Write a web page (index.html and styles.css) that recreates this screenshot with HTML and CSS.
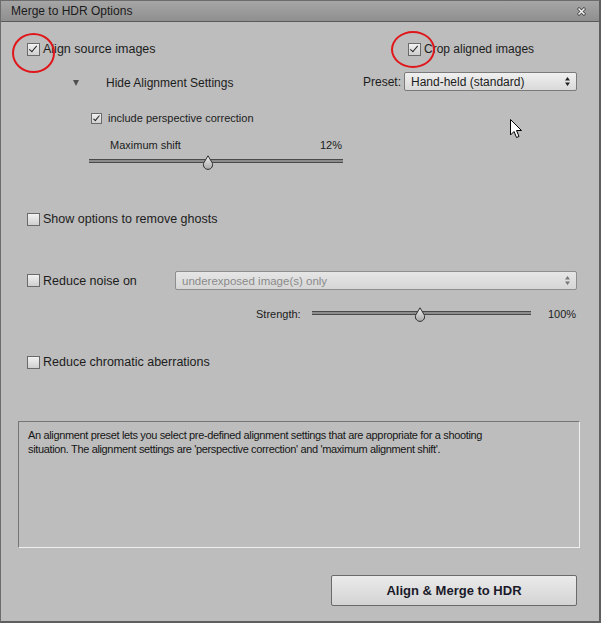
FILE: index.html
```html
<!DOCTYPE html>
<html lang="en">
<head>
	<meta charset="UTF-8">
	<title>Merge to HDR Options</title>
	<link rel="stylesheet" href="styles.css">
</head>
<body>
	<div class="window">
		<!--title bar-->
		<div class="titlebar">
			<span class="title">Merge to HDR Options</span>
			<svg class="close" width="9" height="9" viewBox="0 0 9 9">
				<path d="M1 1 L8 8 M8 1 L1 8" stroke="#3a3a3a" stroke-width="3"/>
				<path d="M1.5 1.5 L7.5 7.5 M7.5 1.5 L1.5 7.5" stroke="#f4f4f4" stroke-width="1.6"/>
			</svg>
		</div>

		<div class="content">
			<!--alignment settings-->
			<div class="top">
				<div class="left">
					<label class="row big">
						<span class="check checked"></span>Align source images
					</label>
					<div class="row toggle">
						<span class="tri"></span>Hide Alignment Settings
					</div>
					<label class="row small persp">
						<span class="check mini checked"></span>include perspective correction
					</label>
					<div class="row small shift">
						<span>Maximum shift</span><span>12%</span>
					</div>
					<div class="slider shiftslider">
						<div class="track"></div>
						<span class="thumb" style="left:47%"></span>
					</div>
				</div>
				<div class="right">
					<label class="row big crop">
						<span class="check checked"></span>Crop aligned images
					</label>
					<div class="row preset">
						<span class="plabel">Preset:</span>
						<div class="select">Hand-held (standard)<span class="arrows"></span></div>
					</div>
				</div>
			</div>

			<label class="row big ghosts">
				<span class="check"></span>Show options to remove ghosts
			</label>

			<div class="row big noise">
				<label class="noiselabel"><span class="check"></span>Reduce noise on</label>
				<div class="select disabled">underexposed image(s) only<span class="arrows"></span></div>
			</div>

			<div class="row small strength">
				<span class="slabel">Strength:</span>
				<div class="slider strslider">
					<div class="track"></div>
					<span class="thumb" style="left:49.5%"></span>
				</div>
				<span class="sval">100%</span>
			</div>

			<label class="row big chroma">
				<span class="check"></span>Reduce chromatic aberrations
			</label>

			<!--help text-->
			<div class="desc">
				<p>An alignment preset lets you select pre-defined alignment settings that are appropriate for a shooting situation. The alignment settings are 'perspective correction' and 'maximum alignment shift'.</p>
			</div>

			<div class="buttons">
				<button class="btn">Align &amp; Merge to HDR</button>
			</div>
		</div>

		<!--annotations-->
		<span class="ring ring1"></span>
		<span class="ring ring2"></span>
		<svg class="cursor" width="13" height="20" viewBox="0 0 13 20">
			<path d="M0.5 0.5 L0.5 16 L4 12.5 L6.5 18.5 L9 17.5 L6.5 11.5 L11.5 11.5 Z" fill="#fff" stroke="#000" stroke-width="1"/>
		</svg>
	</div>
</body>
</html>
```

FILE: styles.css
```css
*{
	margin:0;
	padding:0;
	box-sizing:border-box;
}
body{
	background:#bdbdbd;
	font-family:"Liberation Sans", Arial, sans-serif;
	color:#1c1c1c;
}

.window{
	position:relative;
	width:601px;
	height:623px;
	border:1px solid #6c6c6c;
	border-right:2px solid #5e5e5e;
	border-bottom:2px solid #5e5e5e;
	background:#bdbdbd;
	overflow:hidden;
}
.titlebar{
	height:21px;
	background:linear-gradient(#a6a6a6,#8f8f8f);
	border-bottom:1px solid #5a5a5a;
	display:flex;
	align-items:center;
	justify-content:space-between;
	padding:0 13px 0 10px;
}
.title{
	font-size:12px;
	color:#1a1a1a;
}
.close{
	display:block;
}

.content{
	padding:18px 0 0 26px;
}
.row{
	display:flex;
	align-items:center;
	height:18px;
}
.big{
	font-size:12.5px;
}
.small{
	font-size:11px;
}

/*checkboxes*/
.check{
	position:relative;
	display:inline-block;
	width:13px;
	height:13px;
	border:1px solid #6a6a6a;
	background:linear-gradient(#f2f2f2,#cfcfcf);
	margin-right:3px;
	flex:none;
}
.check.mini{
	width:11px;
	height:11px;
	margin-right:6px;
}
.check.checked:after{
	content:"";
	position:absolute;
	left:3px;
	top:0px;
	width:3px;
	height:7px;
	border:solid #222;
	border-width:0 1.5px 1.5px 0;
	transform:rotate(40deg);
}
.check.mini.checked:after{
	left:3px;
	top:0;
	width:2px;
	height:6px;
	border-width:0 1px 1px 0;
}

.top{
	display:flex;
	margin-bottom:40px;
}
.left{
	width:317px;
}
.right{
	margin-left:19px;
}
.toggle{
	margin-top:16px;
	padding-left:46px;
	font-size:12px;
}
.tri{
	width:0;
	height:0;
	border-left:3.5px solid transparent;
	border-right:3.5px solid transparent;
	border-top:6px solid #505050;
	margin-right:27px;
}
.persp{
	margin-top:17px;
	padding-left:64px;
}
.shift{
	margin-top:9px;
	padding-left:83px;
	width:315px;
	justify-content:space-between;
}

/*sliders*/
.slider{
	position:relative;
	height:16px;
}
.track{
	position:absolute;
	left:0;
	right:0;
	top:5px;
	height:4px;
	background:#8c8c8c;
	border-top:1px solid #4a4a4a;
	border-bottom:1px solid #4a4a4a;
}
.thumb{
	position:absolute;
	top:1px;
	width:12px;
	height:15px;
	margin-left:-6px;
	background:url("data:image/svg+xml,%3Csvg xmlns='http://www.w3.org/2000/svg' width='12' height='15' viewBox='0 0 12 15'%3E%3Cdefs%3E%3ClinearGradient id='g' x1='0' y1='0' x2='0' y2='1'%3E%3Cstop offset='0' stop-color='%23f0f0f0'/%3E%3Cstop offset='1' stop-color='%23a8a8a8'/%3E%3C/linearGradient%3E%3C/defs%3E%3Cpath d='M6 0.8 L10 7.5 A4.6 4.6 0 1 1 2 7.5 Z' fill='url(%23g)' stroke='%23303030' stroke-width='1'/%3E%3C/svg%3E") no-repeat;
}
.shiftslider{
	margin-left:62px;
	width:254px;
}

/*right column*/
.crop{
	padding-left:45px;
	font-size:12px;
}
.preset{
	margin-top:14px;
	height:19px;
	font-size:12px;
}
.plabel{
	margin-right:3px;
}
.select{
	position:relative;
	display:flex;
	align-items:center;
	width:173px;
	height:19px;
	padding-left:6px;
	border:1px solid #7a7a7a;
	border-radius:2px;
	background:linear-gradient(#f0f0f0,#d9d9d9);
	font-size:12px;
	color:#1c1c1c;
}
.arrows{
	position:absolute;
	right:6px;
	top:4px;
	width:5px;
	height:9px;
	background:url("data:image/svg+xml,%3Csvg xmlns='http://www.w3.org/2000/svg' width='5' height='9'%3E%3Cpath d='M2.5 0 L5 3.5 L0 3.5 Z M0 5.5 L5 5.5 L2.5 9 Z' fill='%23222'/%3E%3C/svg%3E") no-repeat;
}
.select.disabled{
	width:402px;
	margin-left:auto;
	margin-right:22px;
	background:linear-gradient(#e6e6e6,#d6d6d6);
	border-color:#8e8e8e;
	color:#8a8a8a;
	font-size:11.5px;
}
.select.disabled .arrows{
	opacity:.55;
}

.noise{
	margin-top:43px;
	height:19px;
}
.noiselabel{
	display:flex;
	align-items:center;
}
.strength{
	margin-top:15px;
	padding-left:229px;
}
.slabel{
	width:56px;
}
.strslider{
	width:219px;
}
.sval{
	margin-left:17px;
}
.chroma{
	margin-top:30px;
}

/*description*/
.desc{
	margin:50px 0 0 -9px;
	width:562px;
	height:127px;
	border:1px solid;
	border-color:#767676 #efefef #efefef #767676;
	padding:6px 9px;
	font-size:11px;
	line-height:14px;
	letter-spacing:-0.35px;
	color:#161616;
}
.desc p{
	width:460px;
}

.buttons{
	display:flex;
	justify-content:flex-end;
	padding-right:22px;
	margin-top:27px;
}
.btn{
	width:246px;
	height:31px;
	border:1px solid #6a6a6a;
	border-radius:2px;
	background:linear-gradient(#ebebeb,#d3d3d3);
	font-family:"Liberation Sans", Arial, sans-serif;
	font-weight:bold;
	font-size:13px;
	color:#1a1a2a;
}

/*red annotation circles and mouse pointer*/
.ring{
	position:absolute;
	border:2px solid #e0171a;
	border-radius:50%;
}
.ring1{
	left:11px;
	top:32px;
	width:43px;
	height:40px;
}
.ring2{
	left:390px;
	top:30px;
	width:44px;
	height:37px;
}
.cursor{
	position:absolute;
	left:509px;
	top:118px;
}
```
